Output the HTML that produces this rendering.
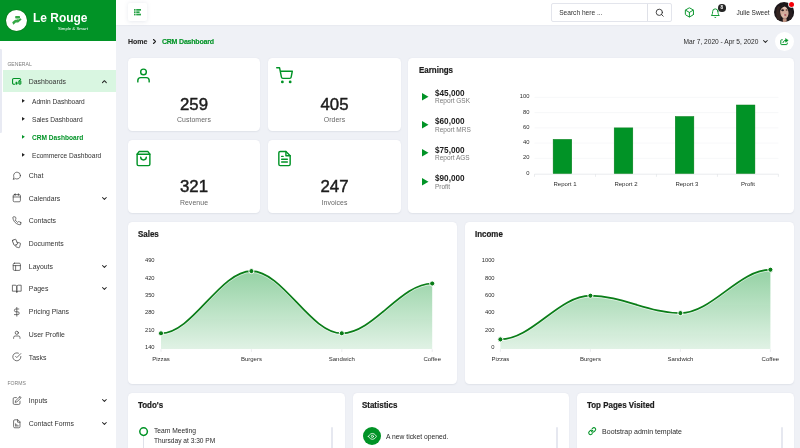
<!DOCTYPE html>
<html lang="en">
<head>
<meta charset="utf-8">
<title>Le Rouge - CRM Dashboard</title>
<style>
*{box-sizing:border-box;margin:0;padding:0}
html,body{width:800px;height:448px;overflow:hidden}
body{will-change:transform;background:#eff1f6;font-family:"Liberation Sans",sans-serif;color:#222;position:relative}
.abs{position:absolute}
svg{display:block;overflow:visible}
.t{white-space:nowrap;position:absolute}
#sidebar{position:absolute;left:0;top:0;width:116px;height:448px;background:#fff}
#brand{position:absolute;left:0;top:0;width:116px;height:40.6px;background:#019326}
#brand .logo{position:absolute;left:5.7px;top:9.6px;width:21.4px;height:21.4px;left:6px;top:9.9px;border-radius:50%;background:#fff;box-shadow:0 0 0 0.6px #087818}
#brand .name{position:absolute;left:32.5px;top:10.9px;transform:scaleX(0.95);transform-origin:0 0;font-size:12.6px;font-weight:700;color:#fff;white-space:nowrap;line-height:14px}
#brand .tag{position:absolute;left:58px;top:25.8px;font-size:4.3px;color:#fff;white-space:nowrap;line-height:5px}
#sthumb{position:absolute;left:0;top:48.6px;width:2.4px;height:84.6px;background:#e8eaf3;border-radius:0 1.2px 1.2px 0}
.slabel{position:absolute;left:7.4px;font-size:5.1px;color:#7d7d7d;line-height:6px;white-space:nowrap}
.sitem.active{position:absolute;left:2.7px;width:113.3px;height:22.3px;background:#d9f6e1}
.stxt{font-size:6.9px;color:#333;line-height:9px}
.ssub{font-size:6.6px;color:#333;line-height:9px}
.ssub.cur{color:#019326;font-weight:700}
#topbar{position:absolute;left:116px;top:0;width:684px;height:25px;background:#fff;box-shadow:0 0.5px 1.5px rgba(90,100,130,.10)}
#toggle{position:absolute;left:127.9px;top:3.1px;width:19.4px;height:18px;background:#fff;border-radius:2px;box-shadow:0 0.3px 4px rgba(120,130,160,.17)}
#search{position:absolute;left:551.2px;top:3.4px;width:120.6px;height:18.4px;border:0.8px solid #e3e5ec;border-radius:2px;background:#fff}
#search .ph{position:absolute;left:7px;top:4.9px;font-size:6.6px;color:#333;line-height:8px;white-space:nowrap}
#search .div{position:absolute;left:94.7px;top:0;width:0.8px;height:100%;background:#dfe1e8}
.bc{font-size:7px;font-weight:700;line-height:9px;-webkit-text-stroke:0.12px currentColor}
.card{position:absolute;background:#fff;border-radius:4.5px;box-shadow:0 0.8px 1.6px rgba(100,110,140,.11)}
.ctitle{font-size:8.5px;font-weight:700;color:#1d1d1d;line-height:10px;transform:scaleX(0.935);transform-origin:0 0;-webkit-text-stroke:0.22px #1d1d1d}
.num{position:absolute;left:0;width:100%;text-align:center;font-size:16.8px;font-weight:400;-webkit-text-stroke:0.45px #1c1c1c;color:#1c1c1c;line-height:18px}
.lbl{position:absolute;left:0;width:100%;text-align:center;font-size:6.9px;letter-spacing:0.08px;color:#666;line-height:8px}
</style>
</head>
<body>
<div id="sidebar">
<div id="brand"><div class="logo"></div>
<svg class="abs" style="left:0;top:0" width="32" height="40" viewBox="0 0 32 40"><g fill="#35a846"><rect x="15.2" y="15.900" width="4.800" height="2.500" rx="0.600"/><path d="M12.200 22.300l3-2.500 2.300.300 3-1.800 1.100 1.300-3.400 2.800-2.400.200-2.400 2.100z"/><rect x="16.600" y="18.600" width="2.200" height="1.400" fill="#7cc988"/></g></svg>
<div class="name">Le Rouge</div><div class="tag">Simple &amp; Smart</div></div>
<div id="sthumb"></div>
<div class="slabel" style="top:60.6px">GENERAL</div>
<div class="sitem active" style="top:70px"></div>
<svg class="abs" style="left:11.600px;top:78.100px" width="9.6" height="6.8" viewBox="0 0 19.2 13.6" fill="none" stroke="#019326" stroke-width="2.200" stroke-linecap="round" stroke-linejoin="round"><path d="M5.500 12.500H3.600a2.500 2.500 0 0 1-2.500-2.500V3.600a2.500 2.500 0 0 1 2.500-2.500H14.800a2.500 2.500 0 0 1 2.500 2.300"/><rect x="7.800" y="8.600" width="2.600" height="3.900" rx="0.600" fill="#019326" stroke-width="1.400"/><rect x="13.600" y="5.400" width="4.200" height="7.100" rx="1" fill="#019326" fill-opacity="0.550" stroke-width="1.800"/></svg>
<div class="t stxt" style="left:28.8px;top:76.7px">Dashboards</div><svg class="abs" style="left:101.6px;top:79.5px" width="4.8" height="3.1" viewBox="0 0 10 6.400" fill="none" stroke="#222" stroke-width="2.100" stroke-linecap="round" stroke-linejoin="round"><path d="M1 5.400l4-4 4 4"/></svg>
<svg class="abs" style="left:22.1px;top:99.2px" width="2.9" height="3.700" viewBox="0 0 3.400 4.200"><polygon points="0,0 3.400,2.100 0,4.200" fill="#222"/></svg>
<div class="t ssub" style="left:32px;top:97.1px">Admin Dashboard</div>
<svg class="abs" style="left:22.1px;top:117.1px" width="2.9" height="3.700" viewBox="0 0 3.400 4.200"><polygon points="0,0 3.400,2.100 0,4.200" fill="#222"/></svg>
<div class="t ssub" style="left:32px;top:115.0px">Sales Dashboard</div>
<svg class="abs" style="left:22.1px;top:134.9px" width="2.9" height="3.700" viewBox="0 0 3.400 4.200"><polygon points="0,0 3.400,2.100 0,4.200" fill="#019326"/></svg>
<div class="t ssub cur" style="left:32px;top:132.8px">CRM Dashboard</div>
<svg class="abs" style="left:22.1px;top:152.8px" width="2.9" height="3.700" viewBox="0 0 3.400 4.200"><polygon points="0,0 3.400,2.100 0,4.200" fill="#222"/></svg>
<div class="t ssub" style="left:32px;top:150.7px">Ecommerce Dashboard</div>
<div class="t stxt" style="left:28.8px;top:171.1px">Chat</div><svg class="abs" style="left:11.6px;top:170.89999999999998px;color:#383838" width="9.6" height="9.6" viewBox="0 0 24 24" fill="none" stroke="#383838" stroke-width="1.75" stroke-linecap="round" stroke-linejoin="round" ><path d="M3 11.5a8.5 8.5 0 0 0 .9 3.8 8.5 8.5 0 0 0 7.6 4.7 8.38 8.38 0 0 0 3.8-.9L21 21l-1.9-5.7a8.38 8.38 0 0 0 .9-3.8 8.5 8.5 0 0 0-4.7-7.6 8.38 8.38 0 0 0-3.8-.9h-.5a8.48 8.48 0 0 0-8 8v.5z" transform="translate(24,0) scale(-1,1)"/></svg>
<div class="t stxt" style="left:28.8px;top:193.6px">Calendars</div><svg class="abs" style="left:11.6px;top:193.39999999999998px;color:#383838" width="9.6" height="9.6" viewBox="0 0 24 24" fill="none" stroke="#383838" stroke-width="1.75" stroke-linecap="round" stroke-linejoin="round" ><rect x="3" y="4" width="18" height="18" rx="3" ry="3"/><line x1="16" y1="2" x2="16" y2="6"/><line x1="8" y1="2" x2="8" y2="6"/><line x1="3" y1="10" x2="21" y2="10"/></svg><svg class="abs" style="left:101.6px;top:196.6px" width="4.8" height="3.1" viewBox="0 0 10 6.400" fill="none" stroke="#222" stroke-width="2.100" stroke-linecap="round" stroke-linejoin="round"><path d="M1 1l4 4 4-4"/></svg>
<div class="t stxt" style="left:28.8px;top:216.3px">Contacts</div><svg class="abs" style="left:11.6px;top:216.1px;color:#383838" width="9.6" height="9.6" viewBox="0 0 24 24" fill="none" stroke="#383838" stroke-width="1.75" stroke-linecap="round" stroke-linejoin="round" ><path d="M22 16.92v3a2 2 0 0 1-2.18 2 19.79 19.79 0 0 1-8.63-3.07 19.5 19.5 0 0 1-6-6 19.79 19.79 0 0 1-3.07-8.67A2 2 0 0 1 4.11 2h3a2 2 0 0 1 2 1.72 12.84 12.84 0 0 0 .7 2.81 2 2 0 0 1-.45 2.11L8.09 9.91a16 16 0 0 0 6 6l1.27-1.27a2 2 0 0 1 2.11-.45 12.84 12.84 0 0 0 2.81.7A2 2 0 0 1 22 16.92z"/></svg>
<div class="t stxt" style="left:28.8px;top:238.7px">Documents</div><svg class="abs" style="left:11.6px;top:238.5px;color:#383838" width="9.6" height="9.6" viewBox="0 0 24 24" fill="none" stroke="#383838" stroke-width="1.75" stroke-linecap="round" stroke-linejoin="round" ><rect x="2.700" y="1.500" width="9.400" height="13.500" rx="1.600" transform="rotate(-22 7.400 8.250)"/><path d="M13.600 8.400l6.600 1.800a1.500 1.500 0 0 1 1.050 1.850l-2.400 8.600a1.500 1.500 0 0 1-1.850 1.050l-6.500-1.800a1.500 1.500 0 0 1-1.050-1.850l.500-1.800"/></svg>
<div class="t stxt" style="left:28.8px;top:261.9px">Layouts</div><svg class="abs" style="left:11.6px;top:261.7px;color:#383838" width="9.6" height="9.6" viewBox="0 0 24 24" fill="none" stroke="#383838" stroke-width="1.75" stroke-linecap="round" stroke-linejoin="round" ><rect x="3" y="3" width="18" height="18" rx="3" ry="3"/><line x1="3" y1="9" x2="21" y2="9"/><line x1="9" y1="21" x2="9" y2="9"/></svg><svg class="abs" style="left:101.6px;top:264.9px" width="4.8" height="3.1" viewBox="0 0 10 6.400" fill="none" stroke="#222" stroke-width="2.100" stroke-linecap="round" stroke-linejoin="round"><path d="M1 1l4 4 4-4"/></svg>
<div class="t stxt" style="left:28.8px;top:284.4px">Pages</div><svg class="abs" style="left:11.6px;top:284.2px;color:#383838" width="9.6" height="9.6" viewBox="0 0 24 24" fill="none" stroke="#383838" stroke-width="1.75" stroke-linecap="round" stroke-linejoin="round" ><path d="M2 3h6a4 4 0 0 1 4 4v14a3 3 0 0 0-3-3H2z"/><path d="M22 3h-6a4 4 0 0 0-4 4v14a3 3 0 0 1 3-3h7z"/></svg><svg class="abs" style="left:101.6px;top:287.4px" width="4.8" height="3.1" viewBox="0 0 10 6.400" fill="none" stroke="#222" stroke-width="2.100" stroke-linecap="round" stroke-linejoin="round"><path d="M1 1l4 4 4-4"/></svg>
<div class="t stxt" style="left:28.8px;top:307.4px">Pricing Plans</div><svg class="abs" style="left:11.6px;top:307.2px;color:#383838" width="9.6" height="9.6" viewBox="0 0 24 24" fill="none" stroke="#383838" stroke-width="1.75" stroke-linecap="round" stroke-linejoin="round" ><line x1="12" y1="1" x2="12" y2="23"/><path d="M17 5H9.5a3.5 3.5 0 0 0 0 7h5a3.5 3.5 0 0 1 0 7H6"/></svg>
<div class="t stxt" style="left:28.8px;top:330.0px">User Profile</div><svg class="abs" style="left:11.6px;top:329.8px;color:#383838" width="9.6" height="9.6" viewBox="0 0 24 24" fill="none" stroke="#383838" stroke-width="1.75" stroke-linecap="round" stroke-linejoin="round" ><path d="M20 21v-2a4 4 0 0 0-4-4H8a4 4 0 0 0-4 4v2"/><circle cx="12" cy="7" r="4"/></svg>
<div class="t stxt" style="left:28.8px;top:352.5px">Tasks</div><svg class="abs" style="left:11.6px;top:352.3px;color:#383838" width="9.6" height="9.6" viewBox="0 0 24 24" fill="none" stroke="#383838" stroke-width="1.75" stroke-linecap="round" stroke-linejoin="round" ><path d="M22 11.08V12a10 10 0 1 1-5.93-9.14"/><polyline points="22 4 12 14.01 9 11.01"/></svg>
<div class="slabel" style="top:379.6px">FORMS</div>
<div class="t stxt" style="left:28.8px;top:396.0px">Inputs</div><svg class="abs" style="left:11.6px;top:395.8px;color:#383838" width="9.6" height="9.6" viewBox="0 0 24 24" fill="none" stroke="#383838" stroke-width="1.75" stroke-linecap="round" stroke-linejoin="round" ><path d="M11 4H6a3 3 0 0 0-3 3v11a3 3 0 0 0 3 3h11a3 3 0 0 0 3-3v-5"/><path d="M18.5 2.5a2.121 2.121 0 0 1 3 3L12 15l-4 1 1-4 9.500-9.500z"/></svg><svg class="abs" style="left:101.6px;top:399.0px" width="4.8" height="3.1" viewBox="0 0 10 6.400" fill="none" stroke="#222" stroke-width="2.100" stroke-linecap="round" stroke-linejoin="round"><path d="M1 1l4 4 4-4"/></svg>
<div class="t stxt" style="left:28.8px;top:418.7px">Contact Forms</div><svg class="abs" style="left:11.6px;top:418.5px;color:#383838" width="9.6" height="9.6" viewBox="0 0 24 24" fill="none" stroke="#383838" stroke-width="1.75" stroke-linecap="round" stroke-linejoin="round" ><path d="M14 2H7a3 3 0 0 0-3 3v14a3 3 0 0 0 3 3h10a3 3 0 0 0 3-3V8z"/><polyline points="14 2 14 8 20 8"/><line x1="9" y1="12" x2="9" y2="18"/><line x1="12" y1="14" x2="12" y2="18"/><line x1="15" y1="16" x2="15" y2="18"/></svg><svg class="abs" style="left:101.6px;top:421.7px" width="4.8" height="3.1" viewBox="0 0 10 6.400" fill="none" stroke="#222" stroke-width="2.100" stroke-linecap="round" stroke-linejoin="round"><path d="M1 1l4 4 4-4"/></svg>
</div>
<div id="topbar"></div><div id="toggle"></div>
<svg class="abs" style="left:134px;top:8.700px" width="7" height="6.400" viewBox="0 0 7 6.400" fill="#019326" fill-opacity="0.850"><rect x="0" y="0" width="1.600" height="1.700"/><rect x="2.200" y="0" width="4.800" height="1.700"/><rect x="0" y="2.350" width="1.600" height="1.700"/><rect x="2.200" y="2.350" width="3.400" height="1.700"/><rect x="0" y="4.700" width="1.600" height="1.700"/><rect x="2.200" y="4.700" width="4.800" height="1.700"/></svg>
<div id="search"><div class="ph">Search here ...</div><div class="div"></div></div>
<svg class="abs" style="left:654.6px;top:7.8px;color:#2a2a2a" width="9.4" height="9.4" viewBox="0 0 24 24" fill="none" stroke="#2a2a2a" stroke-width="2.2" stroke-linecap="round" stroke-linejoin="round" ><circle cx="11" cy="11" r="8"/><line x1="21" y1="21" x2="16.65" y2="16.65"/></svg>
<svg class="abs" style="left:684.4px;top:7.4px;color:#019326" width="10.8" height="10.8" viewBox="0 0 24 24" fill="none" stroke="#019326" stroke-width="2.1" stroke-linecap="round" stroke-linejoin="round" ><path d="M21 16V8a2 2 0 0 0-1-1.73l-7-4a2 2 0 0 0-2 0l-7 4A2 2 0 0 0 3 8v8a2 2 0 0 0 1 1.73l7 4a2 2 0 0 0 2 0l7-4A2 2 0 0 0 21 16z"/><polyline points="3.27 6.96 12 12.01 20.73 6.96"/><line x1="12" y1="22.08" x2="12" y2="12"/></svg>
<svg class="abs" style="left:710.2px;top:7.5px;color:#019326" width="10.6" height="10.6" viewBox="0 0 24 24" fill="none" stroke="#019326" stroke-width="2.1" stroke-linecap="round" stroke-linejoin="round" ><path d="M18 8A6 6 0 0 0 6 8c0 7-3 9-3 9h18s-3-2-3-9"/><path d="M13.73 21a2 2 0 0 1-3.46 0"/></svg>
<div class="abs" style="left:718.1px;top:4px;width:7.6px;height:7.6px;border-radius:50%;background:#262626"></div><div class="t" style="left:718.1px;top:5.2px;width:7.6px;text-align:center;font-size:4.6px;line-height:5px;color:#fff;font-weight:700">8</div>
<div class="t" style="left:736.4px;top:8.4px;font-size:6.5px;line-height:9px;color:#2a2a2a">Julie Sweet</div>
<svg class="abs" style="left:774.1px;top:2.300px" width="20.2" height="20.2" viewBox="0 0 20.2 20.2"><defs><clipPath id="av"><circle cx="10.1" cy="10.1" r="10.1"/></clipPath></defs><g clip-path="url(#av)"><rect width="20.2" height="20.2" fill="#1c171a"/><ellipse cx="4.800" cy="11" rx="2.600" ry="7" fill="#3a2825" opacity="0.850"/><ellipse cx="16.200" cy="13" rx="2" ry="5" fill="#2c2022" opacity="0.800"/><rect x="8.800" y="16.400" width="3.800" height="4" fill="#c29684"/><ellipse cx="10.400" cy="10" rx="4.200" ry="6.700" fill="#d2aa9a" transform="rotate(-6 10.400 10)"/><ellipse cx="11" cy="5.800" rx="2.300" ry="1.700" fill="#e2c3b5"/><ellipse cx="9.200" cy="13.600" rx="1.600" ry="1.800" fill="#e0c0b2" opacity="0.700"/><path d="M5.500 10.500C5 5 8 2.500 11.500 2.800 15 3.200 16.300 6.500 15.200 11.500 14.500 8 13 5.500 10.800 4.600 8 5 6.300 7.500 5.500 10.500z" fill="#1c171a"/><ellipse cx="8.600" cy="8.200" rx="1.400" ry="1" fill="#2b1d20"/><ellipse cx="12.700" cy="7.900" rx="1.100" ry="0.750" fill="#59403f"/><ellipse cx="11.250" cy="13" rx="1.150" ry="0.800" fill="#a23a50"/></g></svg>
<div class="abs" style="left:789px;top:2.300px;width:5.200px;height:5.200px;border-radius:50%;background:#f50008;box-shadow:0 0 0 0.800px #fff"></div>
<div class="t bc" style="left:128px;top:37px;color:#2a2a2a">Home</div>
<svg class="abs" style="left:152.8px;top:39.2px" width="3.2" height="5" viewBox="0 0 6.400 10" fill="none" stroke="#222" stroke-width="2.250" stroke-linecap="round" stroke-linejoin="round"><path d="M1 1l4 4-4 4"/></svg>
<div class="t bc" style="left:161.9px;top:37px;color:#019326;letter-spacing:-0.19px">CRM Dashboard</div>
<div class="t" style="left:683.6px;top:37px;font-size:6.6px;line-height:9px;color:#2a2a2a">Mar 7, 2020 - Apr 5, 2020</div>
<svg class="abs" style="left:763px;top:40.2px" width="4.8" height="3.1" viewBox="0 0 10 6.400" fill="none" stroke="#222" stroke-width="2.100" stroke-linecap="round" stroke-linejoin="round"><path d="M1 1l4 4 4-4"/></svg>
<div class="abs" style="left:775px;top:32px;width:19px;height:19px;border-radius:50%;background:#fff"></div>
<svg class="abs" style="left:780.4px;top:37.6px" width="8.8" height="7.2" viewBox="0 0 22 18" fill="none" stroke="#019326" stroke-width="2.500" stroke-linejoin="round" stroke-linecap="round"><path d="M6 4.500H3.500A1.500 1.500 0 0 0 2 6V15a1.500 1.500 0 0 0 1.500 1.500h13A1.500 1.500 0 0 0 18 15v-2.500"/><path d="M7.500 11.500c.800-4 3.500-5.500 7.500-5.500"/><polygon points="14.500 2 20.500 6 14.500 10" fill="#019326" stroke-width="1.500"/></svg>
<div class="card" style="left:127.6px;top:57.6px;width:132.8px;height:73.8px"><svg class="abs" style="left:7.5px;top:9.7px;color:#019326" width="17" height="17" viewBox="0 0 24 24" fill="none" stroke="#019326" stroke-width="2" stroke-linecap="round" stroke-linejoin="round" ><path d="M20 21v-2a4 4 0 0 0-4-4H8a4 4 0 0 0-4 4v2"/><circle cx="12" cy="7" r="4"/></svg><div class="num" style="top:38.3px">259</div><div class="lbl" style="top:58.5px">Customers</div></div>
<div class="card" style="left:268.1px;top:57.6px;width:132.8px;height:73.8px"><svg class="abs" style="left:7.5px;top:9.7px;color:#019326" width="17" height="17" viewBox="0 0 24 24" fill="none" stroke="#019326" stroke-width="2" stroke-linecap="round" stroke-linejoin="round" ><circle cx="9" cy="21" r="1"/><circle cx="20" cy="21" r="1"/><path d="M1 1h4l2.68 13.39a2 2 0 0 0 2 1.61h9.72a2 2 0 0 0 2-1.61L23 6H6"/></svg><div class="num" style="top:38.3px">405</div><div class="lbl" style="top:58.5px">Orders</div></div>
<div class="card" style="left:127.6px;top:140px;width:132.8px;height:73.2px"><svg class="abs" style="left:7.5px;top:9.7px;color:#019326" width="17" height="17" viewBox="0 0 24 24" fill="none" stroke="#019326" stroke-width="2" stroke-linecap="round" stroke-linejoin="round" ><path d="M6 2L3 6v14a2 2 0 0 0 2 2h14a2 2 0 0 0 2-2V6l-3-4z"/><line x1="3" y1="6" x2="21" y2="6"/><path d="M16 10a4 4 0 0 1-8 0"/></svg><div class="num" style="top:38.3px">321</div><div class="lbl" style="top:58.5px">Revenue</div></div>
<div class="card" style="left:268.1px;top:140px;width:132.8px;height:73.2px"><svg class="abs" style="left:7.5px;top:9.7px;color:#019326" width="17" height="17" viewBox="0 0 24 24" fill="none" stroke="#019326" stroke-width="2" stroke-linecap="round" stroke-linejoin="round" ><path d="M14 2H6a2 2 0 0 0-2 2v16a2 2 0 0 0 2 2h12a2 2 0 0 0 2-2V8z"/><polyline points="14 2 14 8 20 8"/><line x1="16" y1="13" x2="8" y2="13"/><line x1="16" y1="17" x2="8" y2="17"/><polyline points="10 9 9 9 8 9"/></svg><div class="num" style="top:38.3px">247</div><div class="lbl" style="top:58.5px">Invoices</div></div>
<div class="card" style="left:408.3px;top:57.6px;width:385.7px;height:155.5px"></div>
<div class="t ctitle" style="left:418.9px;top:65px">Earnings</div>
<svg class="abs" style="left:421.8px;top:92.5px" width="6.5" height="7.600" viewBox="0 0 6.500 7.600"><polygon points="0,0 6.500,3.800 0,7.600" fill="#019326"/></svg>
<div class="t" style="left:435px;top:88.7px;font-size:8.2px;font-weight:700;line-height:9px;color:#1d1d1d">$45,000</div>
<div class="t" style="left:435px;top:97.0px;font-size:6.5px;line-height:8px;color:#7a7a7a">Report GSK</div>
<svg class="abs" style="left:421.8px;top:121.2px" width="6.5" height="7.600" viewBox="0 0 6.500 7.600"><polygon points="0,0 6.500,3.800 0,7.600" fill="#019326"/></svg>
<div class="t" style="left:435px;top:117.4px;font-size:8.2px;font-weight:700;line-height:9px;color:#1d1d1d">$60,000</div>
<div class="t" style="left:435px;top:125.7px;font-size:6.5px;line-height:8px;color:#7a7a7a">Report MRS</div>
<svg class="abs" style="left:421.8px;top:149.3px" width="6.5" height="7.600" viewBox="0 0 6.500 7.600"><polygon points="0,0 6.500,3.800 0,7.600" fill="#019326"/></svg>
<div class="t" style="left:435px;top:145.5px;font-size:8.2px;font-weight:700;line-height:9px;color:#1d1d1d">$75,000</div>
<div class="t" style="left:435px;top:153.8px;font-size:6.5px;line-height:8px;color:#7a7a7a">Report AGS</div>
<svg class="abs" style="left:421.8px;top:178.0px" width="6.5" height="7.600" viewBox="0 0 6.500 7.600"><polygon points="0,0 6.500,3.800 0,7.600" fill="#019326"/></svg>
<div class="t" style="left:435px;top:174.2px;font-size:8.2px;font-weight:700;line-height:9px;color:#1d1d1d">$90,000</div>
<div class="t" style="left:435px;top:182.5px;font-size:6.5px;line-height:8px;color:#7a7a7a">Profit</div>
<div class="card" style="left:127.6px;top:221.8px;width:329.4px;height:162.5px"></div>
<div class="card" style="left:464.7px;top:221.8px;width:329.3px;height:162.5px"></div>
<div class="t ctitle" style="left:137.7px;top:229.2px">Sales</div>
<div class="t ctitle" style="left:474.9px;top:229.2px">Income</div>
<div class="card" style="left:127.6px;top:392.8px;width:217.1px;height:70px"></div>
<div class="card" style="left:352.7px;top:392.8px;width:216.8px;height:70px"></div>
<div class="card" style="left:577.3px;top:392.8px;width:216.7px;height:70px"></div>
<div class="t ctitle" style="left:137.7px;top:400.2px">Todo's</div>
<div class="t ctitle" style="left:362.3px;top:400.2px">Statistics</div>
<div class="t ctitle" style="left:587.3px;top:400.2px">Top Pages Visited</div>
<div class="abs" style="left:142.9px;top:436px;width:0.8px;height:20px;background:#dfe2ea"></div>
<svg class="abs" style="left:138.8px;top:427.1px" width="9.200" height="9.200" viewBox="0 0 9.200 9.200"><circle cx="4.600" cy="4.600" r="3.800" fill="#fff" stroke="#019326" stroke-width="1.500"/></svg>
<div class="t" style="left:154px;top:426px;font-size:6.7px;line-height:9px;color:#2a2a2a">Team Meeting</div>
<div class="t" style="left:154px;top:436.1px;font-size:6.6px;line-height:9px;color:#2a2a2a">Thursday at 3:30 PM</div>
<div class="abs" style="left:331.4px;top:427px;width:1.6px;height:30px;background:#e6e8f0;border-radius:1px"></div>
<div class="abs" style="left:362.7px;top:427px;width:18.4px;height:18.4px;border-radius:50%;background:#019326"></div>
<svg class="abs" style="left:367.5px;top:431.8px;color:#fff" width="8.8" height="8.8" viewBox="0 0 24 24" fill="none" stroke="#fff" stroke-width="2.2" stroke-linecap="round" stroke-linejoin="round" ><path d="M1 12s4-8 11-8 11 8 11 8-4 8-11 8-11-8-11-8z"/><circle cx="12" cy="12" r="3"/></svg>
<div class="t" style="left:386px;top:431.8px;font-size:6.75px;line-height:9px;color:#2a2a2a">A new ticket opened.</div>
<div class="abs" style="left:556.2px;top:427px;width:1.6px;height:30px;background:#e6e8f0;border-radius:1px"></div>
<svg class="abs" style="left:588px;top:427px;color:#019326" width="8.4" height="8.4" viewBox="0 0 24 24" fill="none" stroke="#019326" stroke-width="3" stroke-linecap="round" stroke-linejoin="round" ><path d="M10 13a5 5 0 0 0 7.54.54l3-3a5 5 0 0 0-7.07-7.07l-1.720 1.710"/><path d="M14 11a5 5 0 0 0-7.54-.54l-3 3a5 5 0 0 0 7.07 7.07l1.710-1.710"/></svg>
<div class="t" style="left:602.1px;top:426.9px;font-size:7px;line-height:9px;color:#2a2a2a">Bootstrap admin template</div>
<div class="abs" style="left:781px;top:427px;width:1.6px;height:30px;background:#e6e8f0;border-radius:1px"></div>
<svg class="abs" style="left:0;top:0" width="800" height="448" viewBox="0 0 800 448" font-family="Liberation Sans, sans-serif">
<defs><linearGradient id="ga" x1="0" y1="0" x2="0" y2="1"><stop offset="0" stop-color="#019326" stop-opacity="0.42"/><stop offset="1" stop-color="#019326" stop-opacity="0.12"/></linearGradient></defs>
<text x="529.4" y="174.70" font-size="5.8" fill="#2c2c2c" text-anchor="end">0</text>
<line x1="534.5" x2="778.4" y1="158.35" y2="158.35" stroke="#eef0f2" stroke-width="0.5"/>
<text x="529.4" y="159.45" font-size="5.8" fill="#2c2c2c" text-anchor="end">20</text>
<line x1="534.5" x2="778.4" y1="143.10" y2="143.10" stroke="#eef0f2" stroke-width="0.5"/>
<text x="529.4" y="144.20" font-size="5.8" fill="#2c2c2c" text-anchor="end">40</text>
<line x1="534.5" x2="778.4" y1="127.85" y2="127.85" stroke="#eef0f2" stroke-width="0.5"/>
<text x="529.4" y="128.95" font-size="5.8" fill="#2c2c2c" text-anchor="end">60</text>
<line x1="534.5" x2="778.4" y1="112.60" y2="112.60" stroke="#eef0f2" stroke-width="0.5"/>
<text x="529.4" y="113.70" font-size="5.8" fill="#2c2c2c" text-anchor="end">80</text>
<line x1="534.5" x2="778.4" y1="97.35" y2="97.35" stroke="#eef0f2" stroke-width="0.5"/>
<text x="529.4" y="98.45" font-size="5.8" fill="#2c2c2c" text-anchor="end">100</text>
<line x1="534.5" x2="778.4" y1="174.2" y2="174.2" stroke="#dcdfe3" stroke-width="0.6"/>
<line x1="534.50" x2="534.50" y1="174.2" y2="176.79999999999998" stroke="#dcdfe3" stroke-width="0.6"/>
<line x1="595.48" x2="595.48" y1="174.2" y2="176.79999999999998" stroke="#dcdfe3" stroke-width="0.6"/>
<line x1="656.46" x2="656.46" y1="174.2" y2="176.79999999999998" stroke="#dcdfe3" stroke-width="0.6"/>
<line x1="717.44" x2="717.44" y1="174.2" y2="176.79999999999998" stroke="#dcdfe3" stroke-width="0.6"/>
<line x1="778.42" x2="778.42" y1="174.2" y2="176.79999999999998" stroke="#dcdfe3" stroke-width="0.6"/>
<rect x="553.10" y="139.29" width="18.7" height="34.31" fill="#019326" stroke="#0a7a1a" stroke-width="0.4"/>
<text x="564.99" y="186.4" font-size="6" fill="#2c2c2c" text-anchor="middle">Report 1</text>
<rect x="614.15" y="127.85" width="18.7" height="45.75" fill="#019326" stroke="#0a7a1a" stroke-width="0.4"/>
<text x="625.97" y="186.4" font-size="6" fill="#2c2c2c" text-anchor="middle">Report 2</text>
<rect x="675.20" y="116.41" width="18.7" height="57.19" fill="#019326" stroke="#0a7a1a" stroke-width="0.4"/>
<text x="686.95" y="186.4" font-size="6" fill="#2c2c2c" text-anchor="middle">Report 3</text>
<rect x="736.25" y="104.97" width="18.7" height="68.62" fill="#019326" stroke="#0a7a1a" stroke-width="0.4"/>
<text x="747.93" y="186.4" font-size="6" fill="#2c2c2c" text-anchor="middle">Profit</text>
<path d="M161.00 333.30 C192.64 333.30 219.76 271.10 251.40 271.10 C283.04 271.10 310.16 333.30 341.80 333.30 C373.44 333.30 400.56 283.50 432.20 283.50 L432.2 348.9 L161 348.9 Z" fill="url(#ga)"/>
<path d="M161.00 333.30 C192.64 333.30 219.76 271.10 251.40 271.10 C283.04 271.10 310.16 333.30 341.80 333.30 C373.44 333.30 400.56 283.50 432.20 283.50" fill="none" stroke="#fff" stroke-opacity="0.55" stroke-width="1.2" transform="translate(0,1.2)"/>
<path d="M161.00 333.30 C192.64 333.30 219.76 271.10 251.40 271.10 C283.04 271.10 310.16 333.30 341.80 333.30 C373.44 333.30 400.56 283.50 432.20 283.50" fill="none" stroke="#0a7d18" stroke-width="1.7" stroke-linecap="round"/>
<line x1="161" x2="161" y1="349.29999999999995" y2="351.9" stroke="#dcdfe3" stroke-width="0.6"/>
<circle cx="161" cy="333.3" r="2.55" fill="#0a7d18" stroke="#fff" stroke-width="1"/>
<line x1="251.4" x2="251.4" y1="349.29999999999995" y2="351.9" stroke="#dcdfe3" stroke-width="0.6"/>
<circle cx="251.4" cy="271.1" r="2.55" fill="#0a7d18" stroke="#fff" stroke-width="1"/>
<line x1="341.8" x2="341.8" y1="349.29999999999995" y2="351.9" stroke="#dcdfe3" stroke-width="0.6"/>
<circle cx="341.8" cy="333.3" r="2.55" fill="#0a7d18" stroke="#fff" stroke-width="1"/>
<line x1="432.2" x2="432.2" y1="349.29999999999995" y2="351.9" stroke="#dcdfe3" stroke-width="0.6"/>
<circle cx="432.2" cy="283.5" r="2.55" fill="#0a7d18" stroke="#fff" stroke-width="1"/>
<text x="154.6" y="262.20" font-size="5.8" fill="#2c2c2c" text-anchor="end">490</text>
<text x="154.6" y="279.62" font-size="5.8" fill="#2c2c2c" text-anchor="end">420</text>
<text x="154.6" y="297.04" font-size="5.8" fill="#2c2c2c" text-anchor="end">350</text>
<text x="154.6" y="314.46" font-size="5.8" fill="#2c2c2c" text-anchor="end">280</text>
<text x="154.6" y="331.88" font-size="5.8" fill="#2c2c2c" text-anchor="end">210</text>
<text x="154.6" y="349.30" font-size="5.8" fill="#2c2c2c" text-anchor="end">140</text>
<text x="161" y="360.7" font-size="6" fill="#2c2c2c" text-anchor="middle">Pizzas</text>
<text x="251.4" y="360.7" font-size="6" fill="#2c2c2c" text-anchor="middle">Burgers</text>
<text x="341.8" y="360.7" font-size="6" fill="#2c2c2c" text-anchor="middle">Sandwich</text>
<text x="432.2" y="360.7" font-size="6" fill="#2c2c2c" text-anchor="middle">Coffee</text>
<path d="M500.40 339.40 C531.90 339.40 558.90 295.70 590.40 295.70 C621.90 295.70 648.90 313.10 680.40 313.10 C711.90 313.10 738.90 269.70 770.40 269.70 L770.4 348.9 L500.4 348.9 Z" fill="url(#ga)"/>
<path d="M500.40 339.40 C531.90 339.40 558.90 295.70 590.40 295.70 C621.90 295.70 648.90 313.10 680.40 313.10 C711.90 313.10 738.90 269.70 770.40 269.70" fill="none" stroke="#fff" stroke-opacity="0.55" stroke-width="1.2" transform="translate(0,1.2)"/>
<path d="M500.40 339.40 C531.90 339.40 558.90 295.70 590.40 295.70 C621.90 295.70 648.90 313.10 680.40 313.10 C711.90 313.10 738.90 269.70 770.40 269.70" fill="none" stroke="#0a7d18" stroke-width="1.7" stroke-linecap="round"/>
<line x1="500.4" x2="500.4" y1="349.29999999999995" y2="351.9" stroke="#dcdfe3" stroke-width="0.6"/>
<circle cx="500.4" cy="339.4" r="2.55" fill="#0a7d18" stroke="#fff" stroke-width="1"/>
<line x1="590.4" x2="590.4" y1="349.29999999999995" y2="351.9" stroke="#dcdfe3" stroke-width="0.6"/>
<circle cx="590.4" cy="295.7" r="2.55" fill="#0a7d18" stroke="#fff" stroke-width="1"/>
<line x1="680.4" x2="680.4" y1="349.29999999999995" y2="351.9" stroke="#dcdfe3" stroke-width="0.6"/>
<circle cx="680.4" cy="313.1" r="2.55" fill="#0a7d18" stroke="#fff" stroke-width="1"/>
<line x1="770.4" x2="770.4" y1="349.29999999999995" y2="351.9" stroke="#dcdfe3" stroke-width="0.6"/>
<circle cx="770.4" cy="269.7" r="2.55" fill="#0a7d18" stroke="#fff" stroke-width="1"/>
<text x="494.6" y="262.20" font-size="5.8" fill="#2c2c2c" text-anchor="end">1000</text>
<text x="494.6" y="279.62" font-size="5.8" fill="#2c2c2c" text-anchor="end">800</text>
<text x="494.6" y="297.04" font-size="5.8" fill="#2c2c2c" text-anchor="end">600</text>
<text x="494.6" y="314.46" font-size="5.8" fill="#2c2c2c" text-anchor="end">400</text>
<text x="494.6" y="331.88" font-size="5.8" fill="#2c2c2c" text-anchor="end">200</text>
<text x="494.6" y="349.30" font-size="5.8" fill="#2c2c2c" text-anchor="end">0</text>
<text x="500.4" y="360.7" font-size="6" fill="#2c2c2c" text-anchor="middle">Pizzas</text>
<text x="590.4" y="360.7" font-size="6" fill="#2c2c2c" text-anchor="middle">Burgers</text>
<text x="680.4" y="360.7" font-size="6" fill="#2c2c2c" text-anchor="middle">Sandwich</text>
<text x="770.4" y="360.7" font-size="6" fill="#2c2c2c" text-anchor="middle">Coffee</text>
</svg>
</body>
</html>
